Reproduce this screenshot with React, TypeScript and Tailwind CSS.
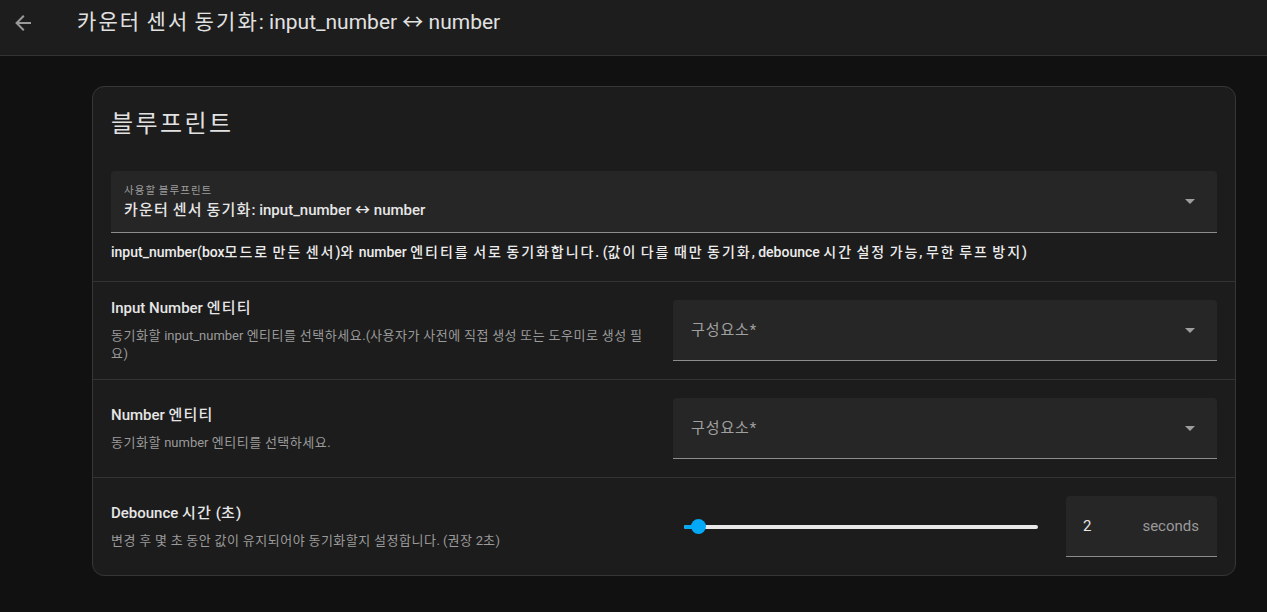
import React from "react";

const font = { fontFamily: "Roboto, 'Noto Sans CJK KR', sans-serif" };

// Hangul runs get a little extra spacing so their advance matches the reference font
const K = (s: string, tr = "tracking-[0.04em]") =>
  s.split(/([\uAC00-\uD7A3]+)/).map((p, i) =>
    /[\uAC00-\uD7A3]/.test(p) ? (
      <span key={i} className={tr}>
        {p}
      </span>
    ) : (
      p
    )
  );

const Caret = () => (
  <svg width="10" height="5" viewBox="0 0 10 5" className="fill-[#9e9e9e]">
    <path d="M0 0 L10 0 L5 5 Z" />
  </svg>
);

const EntitySelect = () => (
  <div className="flex h-[61px] items-center justify-between rounded-t-[4px] border-b border-[#8c8c8c] bg-[#262626] pl-[18px] pr-[22px]">
    <span className="text-[15px] text-[#a0a0a0]">{K("구성요소*", "tracking-[0.06em]")}</span>
    <Caret />
  </div>
);

const Row = ({
  title,
  desc,
  children,
}: {
  title: string;
  desc: string;
  children: React.ReactNode;
}) => (
  <div className="flex h-[98px] items-center gap-[18px] border-t border-[#333333] px-[18px]">
    <div className="flex-1">
      <div className="text-[15px] font-medium leading-5 text-[#e6e6e6]">{K(title, "tracking-[0.08em]")}</div>
      <div className="mt-[9px] pr-2 text-[13px] leading-[18px] text-[#9a9a9a]">{K(desc)}</div>
    </div>
    <div className="flex-1">{children}</div>
  </div>
);

export default function App() {
  return (
    <div style={font} className="flex min-h-[612px] flex-col bg-[#111111]">
      <header className="h-[56px] border-b border-[#333333] bg-[#1d1d1d]">
        <div className="flex h-[46px] items-center">
          <svg width="24" height="24" viewBox="0 0 24 24" className="ml-[11px] fill-[#9a9a9a]">
            <path d="M20 11v2H8l5.5 5.5-1.42 1.42L4.16 12l7.92-7.92L13.5 5.5 8 11h12z" />
          </svg>
          <h1 className="ml-[42px] text-[21px] text-[#e1e1e1]">
            {K("카운터 센서 동기화: input_number ↔ number", "tracking-[0.1em]")}
          </h1>
        </div>
      </header>

      <div className="pl-[92px] pr-[31px] pt-[30px]">
        <div className="overflow-hidden rounded-[12px] border border-[#363636] bg-[#1c1c1c]">
          <div className="px-[18px] pt-[21px]">
            <h2 className="text-[24px] leading-8 text-[#e1e1e1]">{K("블루프린트", "tracking-[0.1em]")}</h2>
            <div className="mt-[31px] flex h-[62px] items-center justify-between rounded-t-[4px] border-b border-[#8c8c8c] bg-[#262626] pl-[13px] pr-[22px]">
              <div className="flex flex-col">
                <span className="text-[10.5px] leading-[14px] text-[#9e9e9e]">{K("사용할 블루프린트", "tracking-[0.1em]")}</span>
                <span className="mt-[2px] text-[15px] font-medium leading-5 text-[#e6e6e6]">
                  {K("카운터 센서 동기화: input_number ↔ number", "tracking-[0.08em]")}
                </span>
              </div>
              <Caret />
            </div>
            <p className="pb-[19px] pt-[9px] text-[14px] font-medium leading-5 text-[#ececec]">
              {K(
                "input_number(box모드로 만든 센서)와 number 엔티티를 서로 동기화합니다. (값이 다를 때만 동기화, debounce 시간 설정 가능, 무한 루프 방지)",
                "tracking-[0.14em]"
              )}
            </p>
          </div>

          <Row
            title="Input Number 엔티티"
            desc="동기화할 input_number 엔티티를 선택하세요.(사용자가 사전에 직접 생성 또는 도우미로 생성 필요)"
          >
            <EntitySelect />
          </Row>
          <Row title="Number 엔티티" desc="동기화할 number 엔티티를 선택하세요.">
            <EntitySelect />
          </Row>
          <Row title="Debounce 시간 (초)" desc="변경 후 몇 초 동안 값이 유지되어야 동기화할지 설정합니다. (권장 2초)">
            <div className="flex items-center">
              <div className="flex flex-1 items-center pl-[11px] pr-[10px]">
                <div className="relative h-[4px] w-full rounded-full bg-[#e8e8e8]">
                  <div className="absolute left-0 top-0 h-[4px] w-[14px] rounded-l-full bg-[#03a9f4]" />
                  <div className="absolute left-[7px] top-[-6px] h-[15px] w-[15px] rounded-full bg-[#03a9f4]" />
                </div>
              </div>
              <div className="ml-[18px] flex h-[61px] w-[151px] items-center justify-between rounded-t-[4px] border-b border-[#8c8c8c] bg-[#262626] pl-[17px] pr-[18px]">
                <span className="text-[15px] text-[#e6e6e6]">2</span>
                <span className="text-[15px] text-[#9a9a9a]">seconds</span>
              </div>
            </div>
          </Row>
        </div>
      </div>
    </div>
  );
}
